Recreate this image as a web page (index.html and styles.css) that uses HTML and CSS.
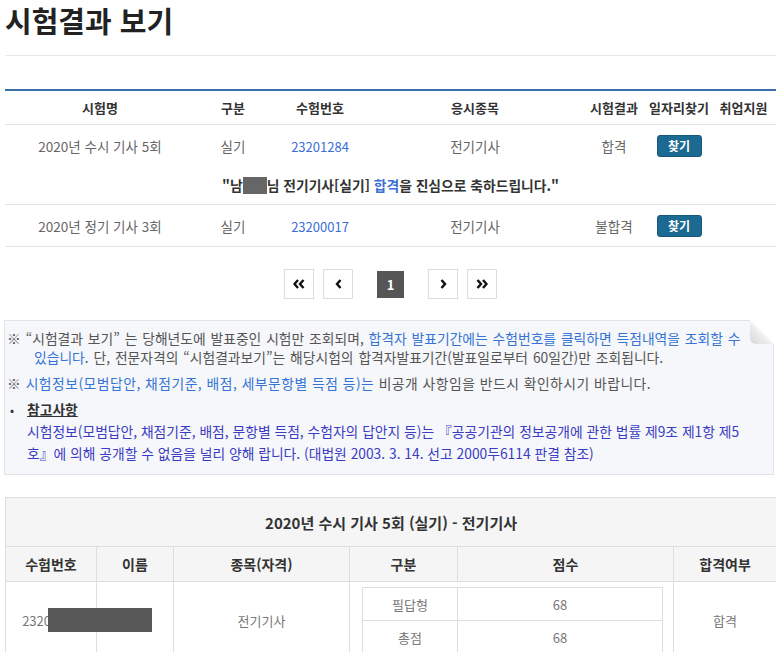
FILE: index.html
```html
<!DOCTYPE html>
<html lang="ko">
<head>
<meta charset="utf-8">
<title>시험결과 보기</title>
<link rel="stylesheet" href="styles.css">
</head>
<body>
<div class="page">
  <h1 class="page-title">시험결과 보기</h1>

  <table class="result-table">
    <colgroup>
      <col class="c1"><col class="c2"><col class="c3"><col class="c4"><col class="c5"><col class="c6"><col class="c7">
    </colgroup>
    <thead>
      <tr><th>시험명</th><th>구분</th><th>수험번호</th><th>응시종목</th><th>시험결과</th><th>일자리찾기</th><th>취업지원</th></tr>
    </thead>
    <tbody>
      <tr class="row-main">
        <td>2020년 수시 기사 5회</td><td>실기</td><td><a class="num" href="#">23201284</a></td><td>전기기사</td><td>합격</td><td><button class="btn-find" type="button">찾기</button></td><td></td>
      </tr>
      <tr class="row-msg">
        <td colspan="7">"남<span class="mask"></span>님 전기기사[실기] <span class="pass">합격</span>을 진심으로 축하드립니다."</td>
      </tr>
      <tr class="row-main row-last">
        <td>2020년 정기 기사 3회</td><td>실기</td><td><a class="num" href="#">23200017</a></td><td>전기기사</td><td>불합격</td><td><button class="btn-find" type="button">찾기</button></td><td></td>
      </tr>
    </tbody>
  </table>

  <div class="pager">
    <a class="pg" href="#" aria-label="처음"><svg width="12" height="10" viewBox="0 0 12 10"><polyline points="5,1 1.5,5 5,9" /><polyline points="10.5,1 7,5 10.5,9" /></svg></a>
    <a class="pg pg-prev" href="#" aria-label="이전"><svg width="7" height="10" viewBox="0 0 7 10"><polyline points="5.5,1 2,5 5.5,9" /></svg></a>
    <span class="pg-cur">1</span>
    <a class="pg pg-next" href="#" aria-label="다음"><svg width="7" height="10" viewBox="0 0 7 10"><polyline points="1.5,1 5,5 1.5,9" /></svg></a>
    <a class="pg" href="#" aria-label="마지막"><svg width="12" height="10" viewBox="0 0 12 10"><polyline points="1.5,1 5,5 1.5,9" /><polyline points="7,1 10.5,5 7,9" /></svg></a>
  </div>

  <div class="notice">
    <p class="note note-first">※ “시험결과 보기” 는 당해년도에 발표중인 시험만 조회되며, <span class="blue">합격자 발표기간에는 수험번호를 클릭하면 득점내역을 조회할 수</span> <span class="blue">있습니다</span>. 단, 전문자격의 “시험결과보기”는 해당시험의 합격자발표기간(발표일로부터 60일간)만 조회됩니다.</p>
    <p class="note note-wide">※ <span class="blue">시험정보(모범답안, 채점기준, 배점, 세부문항별 득점 등)는</span> 비공개 사항임을 반드시 확인하시기 바랍니다.</p>
    <p class="ref-head"><span class="dot">•</span><u>참고사항</u></p>
    <p class="ref-body">시험정보(모범답안, 채점기준, 배점, 문항별 득점, 수험자의 답안지 등)는 『공공기관의 정보공개에 관한 법률 제9조 제1항 제5호』에 의해 공개할 수 없음을 널리 양해 랍니다. (대법원 2003. 3. 14. 선고 2000두6114 판결 참조)</p>
  </div>

  <table class="score-table">
    <colgroup>
      <col class="s1"><col class="s2"><col class="s3"><col class="s4"><col class="s5"><col class="s6">
    </colgroup>
    <thead>
      <tr class="cap"><th colspan="6">2020년 수시 기사 5회 (실기) - 전기기사</th></tr>
      <tr class="head"><th>수험번호</th><th>이름</th><th>종목(자격)</th><th>구분</th><th>점수</th><th>합격여부</th></tr>
    </thead>
    <tbody>
      <tr>
        <td class="cell-id">23201284<span class="mask-id"></span></td>
        <td></td>
        <td>전기기사</td>
        <td colspan="2" class="cell-score">
          <table class="inner">
            <colgroup><col class="i1"><col class="i2"></colgroup>
            <tr><td>필답형</td><td>68</td></tr>
            <tr><td>총점</td><td>68</td></tr>
          </table>
        </td>
        <td>합격</td>
      </tr>
    </tbody>
  </table>
</div>
</body>
</html>
```

FILE: styles.css
```css
html, body {
  margin: 0;
  padding: 0;
  overflow: hidden;
  background: #fff;
}

body {
  font-family: "Noto Sans CJK KR", "Noto Sans", sans-serif;
  font-size: 13px;
  color: #555;
}

.page {
  padding-left: 5px;
  width: 771px;
}

.page-title {
  margin: 0;
  padding: 3px 0 18px;
  font-size: 29px;
  line-height: 34px;
  font-weight: 700;
  color: #222;
  border-bottom: 1px solid #e8e8e8;
}

/* ---------- result table ---------- */
.result-table {
  margin-top: 33px;
  width: 771px;
  table-layout: fixed;
  border-collapse: collapse;
  border-top: 2px solid #3a6fa9;
}

.c1 { width: 190px; }
.c2 { width: 76px; }
.c3 { width: 98px; }
.c4 { width: 212px; }
.c5 { width: 66px; }
.c6 { width: 64px; }
.c7 { width: 65px; }

.result-table th {
  height: 33px;
  padding: 0;
  font-weight: 700;
  color: #333;
  text-align: center;
  border-bottom: 1px solid #e4e4e4;
  white-space: nowrap;
}

.result-table td {
  padding: 0;
  text-align: center;
  vertical-align: middle;
  color: #666;
  font-size: 13.5px;
}

.row-main td { height: 41px; }
.row-last td { border-bottom: 1px solid #e4e4e4; }

.row-msg td {
  height: 38px;
  border-bottom: 1px solid #e4e4e4;
  font-weight: 700;
  font-size: 13.8px;
  color: #333;
}

.num {
  color: #3b6fd6;
  text-decoration: none;
  font-size: 13px;
}

.pass { color: #3b6fd6; }

.mask {
  display: inline-block;
  width: 24px;
  height: 17px;
  background: #666;
  vertical-align: -3px;
}

.btn-find {
  width: 45px;
  height: 22px;
  padding: 0;
  border: 1px solid #155a7c;
  border-radius: 3px;
  background: #1c6a91;
  color: #fff;
  font-family: inherit;
  font-size: 12px;
  font-weight: 700;
  line-height: 18px;
  cursor: pointer;
}

/* ---------- pager ---------- */
.pager {
  margin-top: 22px;
  display: flex;
  justify-content: center;
  align-items: center;
  gap: 9px;
}

.pg {
  width: 30px;
  height: 30px;
  box-sizing: border-box;
  border: 1px solid #dcdcdc;
  background: #fff;
  display: flex;
  align-items: center;
  justify-content: center;
}

.pg svg polyline {
  fill: none;
  stroke: #111;
  stroke-width: 2.4;
}

.pg-cur {
  width: 27px;
  height: 27px;
  margin: 0 15px;
  background: #555;
  color: #fff;
  font-weight: 700;
  display: flex;
  align-items: center;
  justify-content: center;
}

/* ---------- notice ---------- */
.notice {
  position: relative;
  margin-top: 21px;
  margin-left: -1px;
  width: 770px;
  box-sizing: border-box;
  padding: 8px 28px 10px 2px;
  background: #f5f7fa;
  border: 1px solid #e0e3e8;
  font-size: 13.8px;
}

.notice::after {
  content: "";
  position: absolute;
  top: -1px;
  right: -1px;
  width: 24px;
  height: 24px;
  background: linear-gradient(45deg, #d6d6d6 0%, #ececec 40%, #f4f4f4 49%, #fff 51%, #fff 100%);
  border-bottom-left-radius: 6px;
}

.notice p { margin: 0; }

.note {
  line-height: 19px;
  padding-left: 27px;
  text-indent: -27px;
  margin-bottom: 7px !important;
  word-break: keep-all;
}

.note-first { word-spacing: 1px; }
.note-wide { letter-spacing: 0.5px; }

.blue { color: #3574d4; }

.ref-head {
  line-height: 19px;
  margin-bottom: 1px !important;
  color: #333;
  font-weight: 700;
}

.dot {
  display: inline-block;
  width: 20px;
  padding-left: 3px;
  box-sizing: border-box;
  font-weight: 400;
  font-size: 12px;
}

.ref-body {
  padding-left: 20px;
  line-height: 22px;
  color: #3b3bc4;
  word-break: break-all;
}

/* ---------- score table ---------- */
.score-table {
  margin-top: 22px;
  width: 771px;
  table-layout: fixed;
  border-collapse: collapse;
}

.s1 { width: 91px; }
.s2 { width: 77px; }
.s3 { width: 176px; }
.s4 { width: 108px; }
.s5 { width: 216px; }
.s6 { width: 103px; }

.score-table th {
  padding: 0;
  background: #f5f5f5;
  color: #333;
  font-weight: 700;
  text-align: center;
  border: 1px solid #dedede;
}

.score-table .cap th {
  height: 48px;
  font-size: 15px;
}

.score-table .head th {
  height: 34px;
  font-size: 14px;
}

.score-table > tbody > tr > td {
  padding: 0;
  text-align: center;
  vertical-align: middle;
  color: #777;
  border: 1px solid #dedede;
}

.cell-id { position: relative; }

.mask-id {
  position: absolute;
  left: 42px;
  top: 26px;
  width: 104px;
  height: 24px;
  background: #585858;
}

.score-table .cell-score {
  padding: 5px 10px 5px 12px;
}

.inner {
  width: 100%;
  table-layout: fixed;
  border-collapse: collapse;
}

.i1 { width: 95px; }

.inner td {
  height: 32px;
  padding: 0;
  text-align: center;
  color: #777;
  border: 1px solid #dedede;
}
```
